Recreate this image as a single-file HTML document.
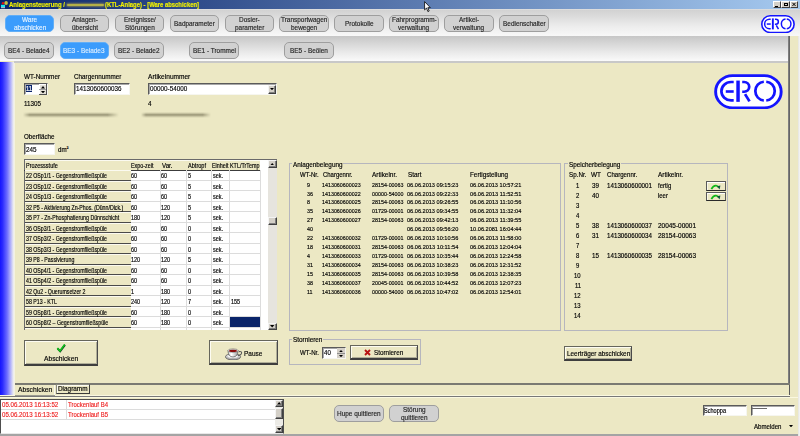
<!DOCTYPE html><html><head><meta charset="utf-8"><style>
*{margin:0;padding:0;box-sizing:border-box}
html,body{width:800px;height:436px;overflow:hidden;background:#ece8c4;font-family:"Liberation Sans",sans-serif;color:#000}
.a{position:absolute}
.t{position:absolute;white-space:nowrap;transform-origin:0 50%;-webkit-text-stroke:0.16px currentColor}
.rb{position:absolute;border-radius:5px;background:#d1d1d1;border:1px solid #9e9e9e}
.rb.sel{background:#3b9cfc;border-color:#62aef6}
.g{position:absolute;border:1px solid #b6b6be}
.sb{position:absolute;background:#d4d0c8;border:1px solid;border-color:#f4f4f4 #404040 #404040 #f4f4f4;box-shadow:inset -1px -1px 0 #808080}
.in{position:absolute;background:#fff;border:1px solid;border-color:#5a5a5a #f6f6f0 #f6f6f0 #5a5a5a;box-shadow:inset 1px 1px 0 #a8a8a8}
</style></head><body>
<div class="a" style="left:0.00px;top:0.00px;width:800.00px;height:9.00px;background:linear-gradient(90deg,#0a246a 0%,#a6caf0 100%)"></div>
<div class="t" style="left:9.00px;top:0.03px;font-size:7.0px;line-height:10px;transform:scaleX(0.8570);font-weight:bold;color:#f0f000">Anlagensteuerung /</div>
<div class="a" style="left:67.00px;top:3.80px;width:37.00px;height:1.80px;background:#b4b048;box-shadow:0 0 2px 1px #7a7a58;border-radius:2px"></div>
<div class="t" style="left:105.00px;top:0.03px;font-size:7.0px;line-height:10px;transform:scaleX(0.8410);font-weight:bold;color:#f0f000">(KTL-Anlage) - [Ware abschicken]</div>
<svg class="a" style="left:0;top:0" width="9" height="9" viewBox="0 0 9 9"><rect x="1" y="4.8" width="4" height="2.6" fill="#18e8f4"/><rect x="1" y="7.3" width="4" height="0.9" fill="#e8d8d8"/><circle cx="3" cy="3.3" r="1.2" fill="#e01010"/><ellipse cx="6.1" cy="2.9" rx="1.8" ry="2" fill="#c8c040"/></svg>
<div class="a" style="left:773.00px;top:1.30px;width:8.00px;height:6.70px;background:#d4d0c8;border:1px solid;border-color:#fff #404040 #404040 #fff"></div>
<div class="a" style="left:781.20px;top:1.30px;width:8.40px;height:6.70px;background:#d4d0c8;border:1px solid;border-color:#fff #404040 #404040 #fff"></div>
<div class="a" style="left:790.00px;top:1.30px;width:8.00px;height:6.70px;background:#d4d0c8;border:1px solid;border-color:#fff #404040 #404040 #fff"></div>
<div class="a" style="left:775.00px;top:5.60px;width:3.00px;height:1.00px;background:#000"></div>
<div class="a" style="left:784.00px;top:3.20px;width:3.50px;height:3.20px;border:0.8px solid #000;border-top-width:1.2px"></div>
<svg class="a" style="left:790px;top:1.3px" width="8" height="6.7" viewBox="0 0 8 6.7"><path d="M2.4,1.8 L5.6,5 M5.6,1.8 L2.4,5" stroke="#000" stroke-width="1"/></svg>
<div class="a" style="left:0.00px;top:9.00px;width:800.00px;height:27.00px;background:linear-gradient(#e6e6e6 0,#d2d2d2 4%,#d8d8d8 20%,#ededed 65%,#f8f8f8 100%)"></div>
<div class="a" style="left:0.00px;top:36.00px;width:789.00px;height:25.00px;background:linear-gradient(#c6c6c6 0,#d4d4d4 25%,#ececec 70%,#f6f6f6 92%,#fbfbfb 100%)"></div>
<div class="rb sel" style="left:4.90px;top:14.5px;width:49.6px;height:17.4px"></div>
<div class="t" style="left:22.12px;top:15.03px;font-size:7.0px;line-height:10px;transform:scaleX(0.9200);color:#e4f2ff">Ware</div>
<div class="t" style="left:13.59px;top:22.73px;font-size:7.0px;line-height:10px;transform:scaleX(0.9200);color:#e4f2ff">abschicken</div>
<div class="rb" style="left:59.80px;top:14.5px;width:49.6px;height:17.4px"></div>
<div class="t" style="left:71.71px;top:15.03px;font-size:7.0px;line-height:10px;transform:scaleX(0.9200);color:#262626">Anlagen-</div>
<div class="t" style="left:71.53px;top:22.73px;font-size:7.0px;line-height:10px;transform:scaleX(0.9200);color:#262626">übersicht</div>
<div class="rb" style="left:114.70px;top:14.5px;width:49.6px;height:17.4px"></div>
<div class="t" style="left:123.57px;top:15.03px;font-size:7.0px;line-height:10px;transform:scaleX(0.9200);color:#262626">Ereignisse/</div>
<div class="t" style="left:124.64px;top:22.73px;font-size:7.0px;line-height:10px;transform:scaleX(0.9200);color:#262626">Störungen</div>
<div class="rb" style="left:169.60px;top:14.5px;width:49.6px;height:17.4px"></div>
<div class="t" style="left:173.99px;top:18.83px;font-size:7.0px;line-height:10px;transform:scaleX(0.9200);color:#262626">Badparameter</div>
<div class="rb" style="left:224.50px;top:14.5px;width:49.6px;height:17.4px"></div>
<div class="t" style="left:238.92px;top:15.03px;font-size:7.0px;line-height:10px;transform:scaleX(0.9200);color:#262626">Dosier-</div>
<div class="t" style="left:234.62px;top:22.73px;font-size:7.0px;line-height:10px;transform:scaleX(0.9200);color:#262626">parameter</div>
<div class="rb" style="left:279.40px;top:14.5px;width:49.6px;height:17.4px"></div>
<div class="t" style="left:281.05px;top:15.03px;font-size:7.0px;line-height:10px;transform:scaleX(0.9200);color:#262626">Transportwagen</div>
<div class="t" style="left:291.13px;top:22.73px;font-size:7.0px;line-height:10px;transform:scaleX(0.9200);color:#262626">bewegen</div>
<div class="rb" style="left:334.30px;top:14.5px;width:49.6px;height:17.4px"></div>
<div class="t" style="left:344.78px;top:18.83px;font-size:7.0px;line-height:10px;transform:scaleX(0.9200);color:#262626">Protokolle</div>
<div class="rb" style="left:389.20px;top:14.5px;width:49.6px;height:17.4px"></div>
<div class="t" style="left:391.63px;top:15.03px;font-size:7.0px;line-height:10px;transform:scaleX(0.9200);color:#262626">Fahrprogramm-</div>
<div class="t" style="left:398.42px;top:22.73px;font-size:7.0px;line-height:10px;transform:scaleX(0.9200);color:#262626">verwaltung</div>
<div class="rb" style="left:444.10px;top:14.5px;width:49.6px;height:17.4px"></div>
<div class="t" style="left:458.88px;top:15.03px;font-size:7.0px;line-height:10px;transform:scaleX(0.9200);color:#262626">Artikel-</div>
<div class="t" style="left:453.32px;top:22.73px;font-size:7.0px;line-height:10px;transform:scaleX(0.9200);color:#262626">verwaltung</div>
<div class="rb" style="left:499.00px;top:14.5px;width:49.6px;height:17.4px"></div>
<div class="t" style="left:502.50px;top:18.83px;font-size:7.0px;line-height:10px;transform:scaleX(0.9200);color:#262626">Bedienschalter</div>
<div class="rb" style="left:4.3px;top:41.6px;width:49.5px;height:17.2px"></div>
<div class="t" style="left:8.28px;top:45.83px;font-size:7.0px;line-height:10px;transform:scaleX(0.9200);color:#262626">BE4 - Belade4</div>
<div class="rb sel" style="left:59.6px;top:41.6px;width:49.2px;height:17.2px"></div>
<div class="t" style="left:63.43px;top:45.83px;font-size:7.0px;line-height:10px;transform:scaleX(0.9200);color:#d8ecff">BE3 - Belade3</div>
<div class="rb" style="left:114.4px;top:41.6px;width:49.6px;height:17.2px"></div>
<div class="t" style="left:118.43px;top:45.83px;font-size:7.0px;line-height:10px;transform:scaleX(0.9200);color:#262626">BE2 - Belade2</div>
<div class="rb" style="left:188.8px;top:41.6px;width:50.5px;height:17.2px"></div>
<div class="t" style="left:192.57px;top:45.83px;font-size:7.0px;line-height:10px;transform:scaleX(0.9200);color:#262626">BE1 - Trommel</div>
<div class="rb" style="left:284.3px;top:41.6px;width:49.8px;height:17.2px"></div>
<div class="t" style="left:290.23px;top:45.83px;font-size:7.0px;line-height:10px;transform:scaleX(0.9200);color:#262626">BE5 - Beölen</div>
<svg class="a" style="left:761.1px;top:14.5px" width="33.9" height="18.3" viewBox="761.1 14.5 33.9 18.3" preserveAspectRatio="none">
<rect x="761.9" y="15.3" width="32.3" height="16.7" rx="8.35" ry="8.35" fill="#fff" stroke="#1414ff" stroke-width="1.6"/>
<g fill="none" stroke="#1414ff">
<path d="M770.8,18.65 H769.5 A4.75,4.75 0 0 0 769.5,28.15 H770.8" stroke-width="1.5"/>
<path d="M766.9,23.55 H770.8" stroke-width="1.5"/>
<path d="M772.95,17.9 V28.9" stroke-width="1.9"/>
<path d="M775,18.65 H775.95 A2.5,2.5 0 0 1 775.95,23.65 H775" stroke-width="1.5"/>
<path d="M776.4,24.9 L778.6,28.7" stroke-width="1.5"/>
<path d="M786.85,18.47 A4.6,4.9 0 0 1 786.85,28.23 M785.65,28.23 A4.6,4.9 0 0 1 785.65,18.47" stroke-width="1.5"/>
</g></svg>
<div class="a" style="left:0.00px;top:61.60px;width:13.80px;height:333.70px;background:linear-gradient(90deg,#1414ff 0%,#2a2aff 18%,#6a6aff 50%,#b8b8fa 78%,#e8e8f0 94%,#f2f2ee 100%)"></div>
<div class="a" style="left:13.80px;top:61.60px;width:1.40px;height:333.70px;background:#f4f2e2"></div>
<div class="a" style="left:13.80px;top:61.20px;width:776.20px;height:1.40px;background:#c8c8c8"></div>
<div class="a" style="left:787.80px;top:36.00px;width:2.00px;height:348.00px;background:linear-gradient(90deg,#8a8a8a,#5a5a5a)"></div>
<div class="a" style="left:788.60px;top:384.00px;width:1.20px;height:12.50px;background:#5a5a5a"></div>
<div class="a" style="left:789.80px;top:36.00px;width:7.70px;height:362.00px;background:#ece8c4"></div>
<div class="a" style="left:797.50px;top:36.00px;width:2.50px;height:400.00px;background:linear-gradient(90deg,#e4e4e0,#f6f6f6)"></div>
<div class="t" style="left:24.00px;top:71.92px;font-size:6.8px;line-height:10px;transform:scaleX(0.9373);">WT-Nummer</div>
<div class="t" style="left:74.20px;top:71.92px;font-size:6.8px;line-height:10px;transform:scaleX(0.9275);">Chargennummer</div>
<div class="t" style="left:148.40px;top:71.92px;font-size:6.8px;line-height:10px;transform:scaleX(0.9655);">Artikelnummer</div>
<div class="in" style="left:24.2px;top:83.2px;width:23.7px;height:12.2px"></div>
<div class="a" style="left:25.90px;top:85.00px;width:6.10px;height:7.40px;background:#0a246a"></div>
<div class="t" style="left:26.20px;top:84.32px;font-size:6.6px;line-height:10px;transform:scaleX(0.9000);color:#fff">11</div>
<div class="a" style="left:39.40px;top:84.40px;width:7.90px;height:10.20px;background:#e2dfd6;border-right:1px solid #505050;border-bottom:1px solid #505050;box-shadow:inset 1px 1px 0 #fff"></div>
<svg class="a" style="left:41.10px;top:86.40px" width="4" height="2.4" viewBox="0 0 4 2.4"><path d="M0,2.4 L2.0,0 L4,2.4z" fill="#000"/></svg>
<svg class="a" style="left:41.10px;top:90.80px" width="4" height="2.4" viewBox="0 0 4 2.4"><path d="M0,0 L2.0,2.4 L4,0z" fill="#000"/></svg>
<div class="a" style="left:39.40px;top:89.30px;width:6.90px;height:0.60px;background:#a0a0a0"></div>
<div class="in" style="left:73.9px;top:83.3px;width:56.1px;height:11.7px"></div>
<div class="t" style="left:76.40px;top:84.23px;font-size:7.4px;line-height:10px;transform:scaleX(0.8533);">1413060600036</div>
<div class="in" style="left:148.4px;top:83.2px;width:128.2px;height:11.4px"></div>
<div class="t" style="left:150.20px;top:84.33px;font-size:7.4px;line-height:10px;transform:scaleX(0.8536);">00000-54000</div>
<div class="sb" style="left:268.4px;top:84.6px;width:7.6px;height:9px"></div>
<svg class="a" style="left:270.20px;top:88.20px" width="4" height="2.2" viewBox="0 0 4 2.2"><path d="M0,0 L2.0,2.2 L4,0z" fill="#000"/></svg>
<div class="t" style="left:24.00px;top:98.83px;font-size:7.2px;line-height:10px;transform:scaleX(0.8739);">11305</div>
<div class="t" style="left:148.40px;top:98.83px;font-size:7.2px;line-height:10px;transform:scaleX(0.8800);">4</div>
<div class="a" style="left:23.00px;top:112.00px;width:96.00px;height:6.00px;background:linear-gradient(180deg,rgba(80,76,50,0) 0%,rgba(80,76,50,.22) 22%,rgba(80,76,50,.5) 45%,rgba(80,76,50,.38) 62%,rgba(80,76,50,.14) 82%,rgba(80,76,50,0) 100%);-webkit-mask-image:linear-gradient(90deg,transparent 0%,#000 7%,#000 88%,transparent 100%)"></div>
<div class="a" style="left:141.00px;top:112.40px;width:70.00px;height:5.40px;background:linear-gradient(180deg,rgba(80,76,50,0) 0%,rgba(80,76,50,.22) 22%,rgba(80,76,50,.5) 45%,rgba(80,76,50,.38) 62%,rgba(80,76,50,.14) 82%,rgba(80,76,50,0) 100%);-webkit-mask-image:linear-gradient(90deg,transparent 0%,#000 7%,#000 88%,transparent 100%)"></div>
<div class="t" style="left:24.30px;top:132.32px;font-size:6.8px;line-height:10px;transform:scaleX(0.9173);">Oberfläche</div>
<div class="in" style="left:24.3px;top:143.3px;width:30.4px;height:11.7px"></div>
<div class="t" style="left:26.00px;top:144.63px;font-size:7.4px;line-height:10px;transform:scaleX(0.8587);">245</div>
<div class="t" style="left:58.00px;top:144.62px;font-size:6.8px;line-height:10px;transform:scaleX(0.9098);">dm</div>
<div class="t" style="left:66.60px;top:143.21px;font-size:6.0px;line-height:10px;transform:scaleX(1.0000);">²</div>
<svg class="a" style="left:714px;top:73.6px" width="68.8" height="35.4" viewBox="761.1 14.5 33.9 18.3" preserveAspectRatio="none">
<rect x="761.9" y="15.3" width="32.3" height="16.7" rx="8.35" ry="8.35" fill="#fff" stroke="#1414ff" stroke-width="1.4400000000000002"/>
<g fill="none" stroke="#1414ff">
<path d="M770.8,18.65 H769.5 A4.75,4.75 0 0 0 769.5,28.15 H770.8" stroke-width="1.35"/>
<path d="M766.9,23.55 H770.8" stroke-width="1.35"/>
<path d="M772.95,17.9 V28.9" stroke-width="1.71"/>
<path d="M775,18.65 H775.95 A2.5,2.5 0 0 1 775.95,23.65 H775" stroke-width="1.35"/>
<path d="M776.4,24.9 L778.6,28.7" stroke-width="1.35"/>
<path d="M786.85,18.47 A4.6,4.9 0 0 1 786.85,28.23 M785.65,28.23 A4.6,4.9 0 0 1 785.65,18.47" stroke-width="1.35"/>
</g></svg>
<svg class="a" style="left:423.6px;top:0.8px" width="8" height="12" viewBox="0 0 8 12"><path d="M0.6,0.6 L0.6,8.9 L2.5,7.1 L3.9,10.6 L5.2,10 L3.8,6.7 L6.3,6.6z" fill="#fff" stroke="#000" stroke-width="0.8" stroke-linejoin="round"/></svg>
<div class="a" style="left:24.3px;top:159.3px;width:252.7px;height:171.2px;overflow:hidden;background:#fff">
<div class="a" style="left:0.00px;top:0.00px;width:236.20px;height:10.90px;background:#ece8c4"></div>
<div class="a" style="left:0.00px;top:0.00px;width:252.70px;height:1.00px;background:#6a6a6a"></div>
<div class="a" style="left:0.00px;top:0.00px;width:1.00px;height:171.70px;background:#6a6a6a"></div>
<div class="a" style="left:1.00px;top:1.00px;width:235.20px;height:0.70px;background:#fbfaf0"></div>
<div class="a" style="left:0.00px;top:10.40px;width:236.20px;height:1.10px;background:#3c3c3c"></div>
<div class="t" style="left:1.70px;top:1.32px;font-size:6.4px;line-height:10px;transform:scaleX(0.8600);">Prozessstufe</div>
<div class="t" style="left:106.80px;top:1.32px;font-size:6.4px;line-height:10px;transform:scaleX(0.8446);">Expo-zeit</div>
<div class="t" style="left:137.30px;top:1.32px;font-size:6.4px;line-height:10px;transform:scaleX(0.9628);">Var.</div>
<div class="t" style="left:163.30px;top:1.32px;font-size:6.4px;line-height:10px;transform:scaleX(0.8734);">Abtropf</div>
<div class="t" style="left:188.00px;top:1.32px;font-size:6.4px;line-height:10px;transform:scaleX(0.8441);">Einheit</div>
<div class="t" style="left:206.00px;top:1.32px;font-size:6.4px;line-height:10px;transform:scaleX(0.8447);">KTL/TrTemp</div>
<div class="a" style="left:1.00px;top:10.90px;width:105.30px;height:10.50px;background:#ece8c4"></div>
<div class="a" style="left:1.00px;top:11.20px;width:105.30px;height:0.80px;background:#fbfaf0"></div>
<div class="a" style="left:1.00px;top:20.40px;width:105.30px;height:1.10px;background:#4a4a4a"></div>
<div class="a" style="left:106.30px;top:20.60px;width:129.90px;height:0.90px;background:#dcdcdc"></div>
<div class="t" style="left:1.70px;top:11.72px;font-size:6.4px;line-height:10px;transform:scaleX(0.8200);">22 OSp1/1 - Gegenstromfließspüle</div>
<div class="t" style="left:107.20px;top:11.72px;font-size:6.4px;line-height:10px;transform:scaleX(0.8600);">60</div>
<div class="t" style="left:137.00px;top:11.72px;font-size:6.4px;line-height:10px;transform:scaleX(0.8600);">60</div>
<div class="t" style="left:163.40px;top:11.72px;font-size:6.4px;line-height:10px;transform:scaleX(0.8600);">5</div>
<div class="t" style="left:188.50px;top:11.72px;font-size:6.4px;line-height:10px;transform:scaleX(0.8600);">sek.</div>
<div class="a" style="left:1.00px;top:21.40px;width:105.30px;height:10.50px;background:#ece8c4"></div>
<div class="a" style="left:1.00px;top:21.70px;width:105.30px;height:0.80px;background:#fbfaf0"></div>
<div class="a" style="left:1.00px;top:30.90px;width:105.30px;height:1.10px;background:#4a4a4a"></div>
<div class="a" style="left:106.30px;top:31.10px;width:129.90px;height:0.90px;background:#dcdcdc"></div>
<div class="t" style="left:1.70px;top:22.22px;font-size:6.4px;line-height:10px;transform:scaleX(0.8200);">23 OSp1/2 - Gegenstromfließspüle</div>
<div class="t" style="left:107.20px;top:22.22px;font-size:6.4px;line-height:10px;transform:scaleX(0.8600);">60</div>
<div class="t" style="left:137.00px;top:22.22px;font-size:6.4px;line-height:10px;transform:scaleX(0.8600);">60</div>
<div class="t" style="left:163.40px;top:22.22px;font-size:6.4px;line-height:10px;transform:scaleX(0.8600);">5</div>
<div class="t" style="left:188.50px;top:22.22px;font-size:6.4px;line-height:10px;transform:scaleX(0.8600);">sek.</div>
<div class="a" style="left:1.00px;top:31.90px;width:105.30px;height:10.50px;background:#ece8c4"></div>
<div class="a" style="left:1.00px;top:32.20px;width:105.30px;height:0.80px;background:#fbfaf0"></div>
<div class="a" style="left:1.00px;top:41.40px;width:105.30px;height:1.10px;background:#4a4a4a"></div>
<div class="a" style="left:106.30px;top:41.60px;width:129.90px;height:0.90px;background:#dcdcdc"></div>
<div class="t" style="left:1.70px;top:32.72px;font-size:6.4px;line-height:10px;transform:scaleX(0.8200);">24 OSp1/3 - Gegenstromfließspüle</div>
<div class="t" style="left:107.20px;top:32.72px;font-size:6.4px;line-height:10px;transform:scaleX(0.8600);">60</div>
<div class="t" style="left:137.00px;top:32.72px;font-size:6.4px;line-height:10px;transform:scaleX(0.8600);">60</div>
<div class="t" style="left:163.40px;top:32.72px;font-size:6.4px;line-height:10px;transform:scaleX(0.8600);">5</div>
<div class="t" style="left:188.50px;top:32.72px;font-size:6.4px;line-height:10px;transform:scaleX(0.8600);">sek.</div>
<div class="a" style="left:1.00px;top:42.40px;width:105.30px;height:10.50px;background:#ece8c4"></div>
<div class="a" style="left:1.00px;top:42.70px;width:105.30px;height:0.80px;background:#fbfaf0"></div>
<div class="a" style="left:1.00px;top:51.90px;width:105.30px;height:1.10px;background:#4a4a4a"></div>
<div class="a" style="left:106.30px;top:52.10px;width:129.90px;height:0.90px;background:#dcdcdc"></div>
<div class="t" style="left:1.70px;top:43.22px;font-size:6.4px;line-height:10px;transform:scaleX(0.8200);">32 P5 - Aktivierung Zn-Phos. (Dünn/Dick.)</div>
<div class="t" style="left:107.20px;top:43.22px;font-size:6.4px;line-height:10px;transform:scaleX(0.8600);">60</div>
<div class="t" style="left:137.00px;top:43.22px;font-size:6.4px;line-height:10px;transform:scaleX(0.8600);">120</div>
<div class="t" style="left:163.40px;top:43.22px;font-size:6.4px;line-height:10px;transform:scaleX(0.8600);">5</div>
<div class="t" style="left:188.50px;top:43.22px;font-size:6.4px;line-height:10px;transform:scaleX(0.8600);">sek.</div>
<div class="a" style="left:1.00px;top:52.90px;width:105.30px;height:10.50px;background:#ece8c4"></div>
<div class="a" style="left:1.00px;top:53.20px;width:105.30px;height:0.80px;background:#fbfaf0"></div>
<div class="a" style="left:1.00px;top:62.40px;width:105.30px;height:1.10px;background:#4a4a4a"></div>
<div class="a" style="left:106.30px;top:62.60px;width:129.90px;height:0.90px;background:#dcdcdc"></div>
<div class="t" style="left:1.70px;top:53.72px;font-size:6.4px;line-height:10px;transform:scaleX(0.8200);">35 P7 - Zn-Phosphatierung Dünnschicht</div>
<div class="t" style="left:107.20px;top:53.72px;font-size:6.4px;line-height:10px;transform:scaleX(0.8600);">180</div>
<div class="t" style="left:137.00px;top:53.72px;font-size:6.4px;line-height:10px;transform:scaleX(0.8600);">120</div>
<div class="t" style="left:163.40px;top:53.72px;font-size:6.4px;line-height:10px;transform:scaleX(0.8600);">5</div>
<div class="t" style="left:188.50px;top:53.72px;font-size:6.4px;line-height:10px;transform:scaleX(0.8600);">sek.</div>
<div class="a" style="left:1.00px;top:63.40px;width:105.30px;height:10.50px;background:#ece8c4"></div>
<div class="a" style="left:1.00px;top:63.70px;width:105.30px;height:0.80px;background:#fbfaf0"></div>
<div class="a" style="left:1.00px;top:72.90px;width:105.30px;height:1.10px;background:#4a4a4a"></div>
<div class="a" style="left:106.30px;top:73.10px;width:129.90px;height:0.90px;background:#dcdcdc"></div>
<div class="t" style="left:1.70px;top:64.22px;font-size:6.4px;line-height:10px;transform:scaleX(0.8200);">36 OSp3/1 - Gegenstromfließspüle</div>
<div class="t" style="left:107.20px;top:64.22px;font-size:6.4px;line-height:10px;transform:scaleX(0.8600);">60</div>
<div class="t" style="left:137.00px;top:64.22px;font-size:6.4px;line-height:10px;transform:scaleX(0.8600);">60</div>
<div class="t" style="left:163.40px;top:64.22px;font-size:6.4px;line-height:10px;transform:scaleX(0.8600);">0</div>
<div class="t" style="left:188.50px;top:64.22px;font-size:6.4px;line-height:10px;transform:scaleX(0.8600);">sek.</div>
<div class="a" style="left:1.00px;top:73.90px;width:105.30px;height:10.50px;background:#ece8c4"></div>
<div class="a" style="left:1.00px;top:74.20px;width:105.30px;height:0.80px;background:#fbfaf0"></div>
<div class="a" style="left:1.00px;top:83.40px;width:105.30px;height:1.10px;background:#4a4a4a"></div>
<div class="a" style="left:106.30px;top:83.60px;width:129.90px;height:0.90px;background:#dcdcdc"></div>
<div class="t" style="left:1.70px;top:74.72px;font-size:6.4px;line-height:10px;transform:scaleX(0.8200);">37 OSp3/2 - Gegenstromfließspüle</div>
<div class="t" style="left:107.20px;top:74.72px;font-size:6.4px;line-height:10px;transform:scaleX(0.8600);">60</div>
<div class="t" style="left:137.00px;top:74.72px;font-size:6.4px;line-height:10px;transform:scaleX(0.8600);">60</div>
<div class="t" style="left:163.40px;top:74.72px;font-size:6.4px;line-height:10px;transform:scaleX(0.8600);">0</div>
<div class="t" style="left:188.50px;top:74.72px;font-size:6.4px;line-height:10px;transform:scaleX(0.8600);">sek.</div>
<div class="a" style="left:1.00px;top:84.40px;width:105.30px;height:10.50px;background:#ece8c4"></div>
<div class="a" style="left:1.00px;top:84.70px;width:105.30px;height:0.80px;background:#fbfaf0"></div>
<div class="a" style="left:1.00px;top:93.90px;width:105.30px;height:1.10px;background:#4a4a4a"></div>
<div class="a" style="left:106.30px;top:94.10px;width:129.90px;height:0.90px;background:#dcdcdc"></div>
<div class="t" style="left:1.70px;top:85.22px;font-size:6.4px;line-height:10px;transform:scaleX(0.8200);">38 OSp3/3 - Gegenstromfließspüle</div>
<div class="t" style="left:107.20px;top:85.22px;font-size:6.4px;line-height:10px;transform:scaleX(0.8600);">60</div>
<div class="t" style="left:137.00px;top:85.22px;font-size:6.4px;line-height:10px;transform:scaleX(0.8600);">60</div>
<div class="t" style="left:163.40px;top:85.22px;font-size:6.4px;line-height:10px;transform:scaleX(0.8600);">0</div>
<div class="t" style="left:188.50px;top:85.22px;font-size:6.4px;line-height:10px;transform:scaleX(0.8600);">sek.</div>
<div class="a" style="left:1.00px;top:94.90px;width:105.30px;height:10.50px;background:#ece8c4"></div>
<div class="a" style="left:1.00px;top:95.20px;width:105.30px;height:0.80px;background:#fbfaf0"></div>
<div class="a" style="left:1.00px;top:104.40px;width:105.30px;height:1.10px;background:#4a4a4a"></div>
<div class="a" style="left:106.30px;top:104.60px;width:129.90px;height:0.90px;background:#dcdcdc"></div>
<div class="t" style="left:1.70px;top:95.72px;font-size:6.4px;line-height:10px;transform:scaleX(0.8200);">39 P8 - Passivierung</div>
<div class="t" style="left:107.20px;top:95.72px;font-size:6.4px;line-height:10px;transform:scaleX(0.8600);">120</div>
<div class="t" style="left:137.00px;top:95.72px;font-size:6.4px;line-height:10px;transform:scaleX(0.8600);">120</div>
<div class="t" style="left:163.40px;top:95.72px;font-size:6.4px;line-height:10px;transform:scaleX(0.8600);">5</div>
<div class="t" style="left:188.50px;top:95.72px;font-size:6.4px;line-height:10px;transform:scaleX(0.8600);">sek.</div>
<div class="a" style="left:1.00px;top:105.40px;width:105.30px;height:10.50px;background:#ece8c4"></div>
<div class="a" style="left:1.00px;top:105.70px;width:105.30px;height:0.80px;background:#fbfaf0"></div>
<div class="a" style="left:1.00px;top:114.90px;width:105.30px;height:1.10px;background:#4a4a4a"></div>
<div class="a" style="left:106.30px;top:115.10px;width:129.90px;height:0.90px;background:#dcdcdc"></div>
<div class="t" style="left:1.70px;top:106.22px;font-size:6.4px;line-height:10px;transform:scaleX(0.8200);">40 OSp4/1 - Gegenstromfließspüle</div>
<div class="t" style="left:107.20px;top:106.22px;font-size:6.4px;line-height:10px;transform:scaleX(0.8600);">60</div>
<div class="t" style="left:137.00px;top:106.22px;font-size:6.4px;line-height:10px;transform:scaleX(0.8600);">60</div>
<div class="t" style="left:163.40px;top:106.22px;font-size:6.4px;line-height:10px;transform:scaleX(0.8600);">0</div>
<div class="t" style="left:188.50px;top:106.22px;font-size:6.4px;line-height:10px;transform:scaleX(0.8600);">sek.</div>
<div class="a" style="left:1.00px;top:115.90px;width:105.30px;height:10.50px;background:#ece8c4"></div>
<div class="a" style="left:1.00px;top:116.20px;width:105.30px;height:0.80px;background:#fbfaf0"></div>
<div class="a" style="left:1.00px;top:125.40px;width:105.30px;height:1.10px;background:#4a4a4a"></div>
<div class="a" style="left:106.30px;top:125.60px;width:129.90px;height:0.90px;background:#dcdcdc"></div>
<div class="t" style="left:1.70px;top:116.72px;font-size:6.4px;line-height:10px;transform:scaleX(0.8200);">41 OSp4/2 - Gegenstromfließspüle</div>
<div class="t" style="left:107.20px;top:116.72px;font-size:6.4px;line-height:10px;transform:scaleX(0.8600);">60</div>
<div class="t" style="left:137.00px;top:116.72px;font-size:6.4px;line-height:10px;transform:scaleX(0.8600);">60</div>
<div class="t" style="left:163.40px;top:116.72px;font-size:6.4px;line-height:10px;transform:scaleX(0.8600);">0</div>
<div class="t" style="left:188.50px;top:116.72px;font-size:6.4px;line-height:10px;transform:scaleX(0.8600);">sek.</div>
<div class="a" style="left:1.00px;top:126.40px;width:105.30px;height:10.50px;background:#ece8c4"></div>
<div class="a" style="left:1.00px;top:126.70px;width:105.30px;height:0.80px;background:#fbfaf0"></div>
<div class="a" style="left:1.00px;top:135.90px;width:105.30px;height:1.10px;background:#4a4a4a"></div>
<div class="a" style="left:106.30px;top:136.10px;width:129.90px;height:0.90px;background:#dcdcdc"></div>
<div class="t" style="left:1.70px;top:127.22px;font-size:6.4px;line-height:10px;transform:scaleX(0.8200);">42 Qu2 - Querumsetzer 2</div>
<div class="t" style="left:107.20px;top:127.22px;font-size:6.4px;line-height:10px;transform:scaleX(0.8600);">1</div>
<div class="t" style="left:137.00px;top:127.22px;font-size:6.4px;line-height:10px;transform:scaleX(0.8600);">180</div>
<div class="t" style="left:163.40px;top:127.22px;font-size:6.4px;line-height:10px;transform:scaleX(0.8600);">0</div>
<div class="t" style="left:188.50px;top:127.22px;font-size:6.4px;line-height:10px;transform:scaleX(0.8600);">sek.</div>
<div class="a" style="left:1.00px;top:136.90px;width:105.30px;height:10.50px;background:#ece8c4"></div>
<div class="a" style="left:1.00px;top:137.20px;width:105.30px;height:0.80px;background:#fbfaf0"></div>
<div class="a" style="left:1.00px;top:146.40px;width:105.30px;height:1.10px;background:#4a4a4a"></div>
<div class="a" style="left:106.30px;top:146.60px;width:129.90px;height:0.90px;background:#dcdcdc"></div>
<div class="t" style="left:1.70px;top:137.72px;font-size:6.4px;line-height:10px;transform:scaleX(0.8200);">58 P13 - KTL</div>
<div class="t" style="left:107.20px;top:137.72px;font-size:6.4px;line-height:10px;transform:scaleX(0.8600);">240</div>
<div class="t" style="left:137.00px;top:137.72px;font-size:6.4px;line-height:10px;transform:scaleX(0.8600);">120</div>
<div class="t" style="left:163.40px;top:137.72px;font-size:6.4px;line-height:10px;transform:scaleX(0.8600);">7</div>
<div class="t" style="left:188.50px;top:137.72px;font-size:6.4px;line-height:10px;transform:scaleX(0.8600);">sek.</div>
<div class="t" style="left:206.60px;top:137.72px;font-size:6.4px;line-height:10px;transform:scaleX(0.8600);">155</div>
<div class="a" style="left:1.00px;top:147.40px;width:105.30px;height:10.50px;background:#ece8c4"></div>
<div class="a" style="left:1.00px;top:147.70px;width:105.30px;height:0.80px;background:#fbfaf0"></div>
<div class="a" style="left:1.00px;top:156.90px;width:105.30px;height:1.10px;background:#4a4a4a"></div>
<div class="a" style="left:106.30px;top:157.10px;width:129.90px;height:0.90px;background:#dcdcdc"></div>
<div class="t" style="left:1.70px;top:148.22px;font-size:6.4px;line-height:10px;transform:scaleX(0.8200);">59 OSp8/1 - Gegenstromfließspüle</div>
<div class="t" style="left:107.20px;top:148.22px;font-size:6.4px;line-height:10px;transform:scaleX(0.8600);">60</div>
<div class="t" style="left:137.00px;top:148.22px;font-size:6.4px;line-height:10px;transform:scaleX(0.8600);">180</div>
<div class="t" style="left:163.40px;top:148.22px;font-size:6.4px;line-height:10px;transform:scaleX(0.8600);">0</div>
<div class="t" style="left:188.50px;top:148.22px;font-size:6.4px;line-height:10px;transform:scaleX(0.8600);">sek.</div>
<div class="a" style="left:1.00px;top:157.90px;width:105.30px;height:10.50px;background:#ece8c4"></div>
<div class="a" style="left:1.00px;top:158.20px;width:105.30px;height:0.80px;background:#fbfaf0"></div>
<div class="a" style="left:1.00px;top:167.40px;width:105.30px;height:1.10px;background:#4a4a4a"></div>
<div class="a" style="left:106.30px;top:167.60px;width:129.90px;height:0.90px;background:#dcdcdc"></div>
<div class="t" style="left:1.70px;top:158.72px;font-size:6.4px;line-height:10px;transform:scaleX(0.8200);">60 OSp8/2 – Gegenstromfließspüle</div>
<div class="t" style="left:107.20px;top:158.72px;font-size:6.4px;line-height:10px;transform:scaleX(0.8600);">60</div>
<div class="t" style="left:137.00px;top:158.72px;font-size:6.4px;line-height:10px;transform:scaleX(0.8600);">180</div>
<div class="t" style="left:163.40px;top:158.72px;font-size:6.4px;line-height:10px;transform:scaleX(0.8600);">0</div>
<div class="t" style="left:188.50px;top:158.72px;font-size:6.4px;line-height:10px;transform:scaleX(0.8600);">sek.</div>
<div class="a" style="left:205.50px;top:158.20px;width:30.60px;height:9.80px;background:#0a246a"></div>
<div class="a" style="left:1.00px;top:168.40px;width:105.30px;height:10.50px;background:#ece8c4"></div>
<div class="a" style="left:1.00px;top:168.70px;width:105.30px;height:0.80px;background:#fbfaf0"></div>
<div class="a" style="left:1.00px;top:177.90px;width:105.30px;height:1.10px;background:#4a4a4a"></div>
<div class="a" style="left:106.30px;top:178.10px;width:129.90px;height:0.90px;background:#dcdcdc"></div>
<div class="t" style="left:1.70px;top:169.22px;font-size:6.4px;line-height:10px;transform:scaleX(0.8200);">61 OSp8/3 – Gegenstromfließspüle</div>
<div class="t" style="left:107.20px;top:169.22px;font-size:6.4px;line-height:10px;transform:scaleX(0.8600);">60</div>
<div class="t" style="left:137.00px;top:169.22px;font-size:6.4px;line-height:10px;transform:scaleX(0.8600);">180</div>
<div class="t" style="left:163.40px;top:169.22px;font-size:6.4px;line-height:10px;transform:scaleX(0.8600);">0</div>
<div class="t" style="left:188.50px;top:169.22px;font-size:6.4px;line-height:10px;transform:scaleX(0.8600);">sek.</div>
<div class="a" style="left:135.60px;top:10.90px;width:0.90px;height:160.80px;background:#dcdcdc"></div>
<div class="a" style="left:161.60px;top:10.90px;width:0.90px;height:160.80px;background:#dcdcdc"></div>
<div class="a" style="left:186.70px;top:10.90px;width:0.90px;height:160.80px;background:#dcdcdc"></div>
<div class="a" style="left:204.80px;top:10.90px;width:0.90px;height:160.80px;background:#dcdcdc"></div>
<div class="a" style="left:235.70px;top:10.90px;width:0.90px;height:160.80px;background:#dcdcdc"></div>
<div class="a" style="left:244.10px;top:1.00px;width:8.60px;height:170.70px;background:#e6e4de"></div>
<div class="a" style="left:252.30px;top:0.00px;width:1.00px;height:171.70px;background:#d0d0d0"></div>
<div class="sb" style="left:244.10px;top:1.20px;width:8.4px;height:7.6px"></div>
<svg class="a" style="left:246.20px;top:3.50px" width="4.4" height="2.6" viewBox="0 0 4.4 2.6"><path d="M0,2.6 L2.2,0 L4.4,2.6z" fill="#000"/></svg>
<div class="sb" style="left:244.10px;top:57.60px;width:8.4px;height:7.8px"></div>
<div class="sb" style="left:244.10px;top:163.60px;width:8.4px;height:7.6px"></div>
<svg class="a" style="left:246.20px;top:166.10px" width="4.4" height="2.6" viewBox="0 0 4.4 2.6"><path d="M0,0 L2.2,2.6 L4.4,0z" fill="#000"/></svg>
</div>
<div class="g" style="left:289.2px;top:163.3px;width:271.5px;height:168px"></div>
<div class="a" style="left:292.00px;top:160.00px;width:51.00px;height:7.00px;background:#ece8c4"></div>
<div class="t" style="left:292.80px;top:159.62px;font-size:6.6px;line-height:10px;transform:scaleX(0.9641);">Anlagenbelegung</div>
<div class="t" style="left:300.00px;top:169.82px;font-size:6.6px;line-height:10px;transform:scaleX(0.9115);">WT-Nr.</div>
<div class="t" style="left:322.80px;top:169.82px;font-size:6.6px;line-height:10px;transform:scaleX(0.9042);">Chargennr.</div>
<div class="t" style="left:372.25px;top:169.82px;font-size:6.6px;line-height:10px;transform:scaleX(0.9744);">Artikelnr.</div>
<div class="t" style="left:407.60px;top:169.82px;font-size:6.6px;line-height:10px;transform:scaleX(0.9686);">Start</div>
<div class="t" style="left:469.90px;top:169.82px;font-size:6.6px;line-height:10px;transform:scaleX(0.9597);">Fertigstellung</div>
<div class="t" style="left:306.70px;top:179.51px;font-size:6.25px;line-height:10px;transform:scaleX(0.8600);">9</div>
<div class="t" style="left:322.40px;top:179.51px;font-size:6.25px;line-height:10px;transform:scaleX(0.8542);">1413060600023</div>
<div class="t" style="left:372.00px;top:179.51px;font-size:6.25px;line-height:10px;transform:scaleX(0.8550);">28154-00063</div>
<div class="t" style="left:407.20px;top:179.51px;font-size:6.25px;line-height:10px;transform:scaleX(0.8944);">06.06.2013 09:15:23</div>
<div class="t" style="left:469.60px;top:179.51px;font-size:6.25px;line-height:10px;transform:scaleX(0.8944);">06.06.2013 10:57:21</div>
<div class="t" style="left:306.70px;top:188.50px;font-size:6.25px;line-height:10px;transform:scaleX(0.8600);">36</div>
<div class="t" style="left:322.40px;top:188.50px;font-size:6.25px;line-height:10px;transform:scaleX(0.8542);">1413060600022</div>
<div class="t" style="left:372.00px;top:188.50px;font-size:6.25px;line-height:10px;transform:scaleX(0.8550);">00000-54000</div>
<div class="t" style="left:407.20px;top:188.50px;font-size:6.25px;line-height:10px;transform:scaleX(0.8944);">06.06.2013 09:22:33</div>
<div class="t" style="left:469.60px;top:188.50px;font-size:6.25px;line-height:10px;transform:scaleX(0.9017);">06.06.2013 11:52:51</div>
<div class="t" style="left:306.70px;top:197.49px;font-size:6.25px;line-height:10px;transform:scaleX(0.8600);">8</div>
<div class="t" style="left:322.40px;top:197.49px;font-size:6.25px;line-height:10px;transform:scaleX(0.8542);">1413060600025</div>
<div class="t" style="left:372.00px;top:197.49px;font-size:6.25px;line-height:10px;transform:scaleX(0.8550);">28154-00063</div>
<div class="t" style="left:407.20px;top:197.49px;font-size:6.25px;line-height:10px;transform:scaleX(0.8944);">06.06.2013 09:26:55</div>
<div class="t" style="left:469.60px;top:197.49px;font-size:6.25px;line-height:10px;transform:scaleX(0.9017);">06.06.2013 11:10:56</div>
<div class="t" style="left:306.70px;top:206.48px;font-size:6.25px;line-height:10px;transform:scaleX(0.8600);">35</div>
<div class="t" style="left:322.40px;top:206.48px;font-size:6.25px;line-height:10px;transform:scaleX(0.8542);">1413060600026</div>
<div class="t" style="left:372.00px;top:206.48px;font-size:6.25px;line-height:10px;transform:scaleX(0.8550);">01729-00001</div>
<div class="t" style="left:407.20px;top:206.48px;font-size:6.25px;line-height:10px;transform:scaleX(0.8944);">06.06.2013 09:34:55</div>
<div class="t" style="left:469.60px;top:206.48px;font-size:6.25px;line-height:10px;transform:scaleX(0.9017);">06.06.2013 11:32:04</div>
<div class="t" style="left:306.70px;top:215.47px;font-size:6.25px;line-height:10px;transform:scaleX(0.8600);">27</div>
<div class="t" style="left:322.40px;top:215.47px;font-size:6.25px;line-height:10px;transform:scaleX(0.8542);">1413060600027</div>
<div class="t" style="left:372.00px;top:215.47px;font-size:6.25px;line-height:10px;transform:scaleX(0.8550);">28154-00063</div>
<div class="t" style="left:407.20px;top:215.47px;font-size:6.25px;line-height:10px;transform:scaleX(0.8944);">06.06.2013 09:42:13</div>
<div class="t" style="left:469.60px;top:215.47px;font-size:6.25px;line-height:10px;transform:scaleX(0.9017);">06.06.2013 11:39:55</div>
<div class="t" style="left:306.70px;top:224.46px;font-size:6.25px;line-height:10px;transform:scaleX(0.8600);">40</div>
<div class="t" style="left:407.20px;top:224.46px;font-size:6.25px;line-height:10px;transform:scaleX(0.8944);">06.06.2013 09:56:20</div>
<div class="t" style="left:469.60px;top:224.46px;font-size:6.25px;line-height:10px;transform:scaleX(0.8944);">10.06.2081 16:04:44</div>
<div class="t" style="left:306.70px;top:233.45px;font-size:6.25px;line-height:10px;transform:scaleX(0.8600);">22</div>
<div class="t" style="left:322.40px;top:233.45px;font-size:6.25px;line-height:10px;transform:scaleX(0.8542);">1413060600032</div>
<div class="t" style="left:372.00px;top:233.45px;font-size:6.25px;line-height:10px;transform:scaleX(0.8550);">01729-00001</div>
<div class="t" style="left:407.20px;top:233.45px;font-size:6.25px;line-height:10px;transform:scaleX(0.8944);">06.06.2013 10:10:56</div>
<div class="t" style="left:469.60px;top:233.45px;font-size:6.25px;line-height:10px;transform:scaleX(0.9017);">06.06.2013 11:58:00</div>
<div class="t" style="left:306.70px;top:242.44px;font-size:6.25px;line-height:10px;transform:scaleX(0.8600);">18</div>
<div class="t" style="left:322.40px;top:242.44px;font-size:6.25px;line-height:10px;transform:scaleX(0.8542);">1413060600031</div>
<div class="t" style="left:372.00px;top:242.44px;font-size:6.25px;line-height:10px;transform:scaleX(0.8550);">28154-00063</div>
<div class="t" style="left:407.20px;top:242.44px;font-size:6.25px;line-height:10px;transform:scaleX(0.9017);">06.06.2013 10:11:54</div>
<div class="t" style="left:469.60px;top:242.44px;font-size:6.25px;line-height:10px;transform:scaleX(0.8944);">06.06.2013 12:04:04</div>
<div class="t" style="left:306.70px;top:251.43px;font-size:6.25px;line-height:10px;transform:scaleX(0.8600);">4</div>
<div class="t" style="left:322.40px;top:251.43px;font-size:6.25px;line-height:10px;transform:scaleX(0.8542);">1413060600033</div>
<div class="t" style="left:372.00px;top:251.43px;font-size:6.25px;line-height:10px;transform:scaleX(0.8550);">01729-00001</div>
<div class="t" style="left:407.20px;top:251.43px;font-size:6.25px;line-height:10px;transform:scaleX(0.8944);">06.06.2013 10:35:44</div>
<div class="t" style="left:469.60px;top:251.43px;font-size:6.25px;line-height:10px;transform:scaleX(0.8944);">06.06.2013 12:24:58</div>
<div class="t" style="left:306.70px;top:260.42px;font-size:6.25px;line-height:10px;transform:scaleX(0.8600);">31</div>
<div class="t" style="left:322.40px;top:260.42px;font-size:6.25px;line-height:10px;transform:scaleX(0.8542);">1413060600034</div>
<div class="t" style="left:372.00px;top:260.42px;font-size:6.25px;line-height:10px;transform:scaleX(0.8550);">28154-00063</div>
<div class="t" style="left:407.20px;top:260.42px;font-size:6.25px;line-height:10px;transform:scaleX(0.8944);">06.06.2013 10:38:23</div>
<div class="t" style="left:469.60px;top:260.42px;font-size:6.25px;line-height:10px;transform:scaleX(0.8944);">06.06.2013 12:31:52</div>
<div class="t" style="left:306.70px;top:269.41px;font-size:6.25px;line-height:10px;transform:scaleX(0.8600);">15</div>
<div class="t" style="left:322.40px;top:269.41px;font-size:6.25px;line-height:10px;transform:scaleX(0.8542);">1413060600035</div>
<div class="t" style="left:372.00px;top:269.41px;font-size:6.25px;line-height:10px;transform:scaleX(0.8550);">28154-00063</div>
<div class="t" style="left:407.20px;top:269.41px;font-size:6.25px;line-height:10px;transform:scaleX(0.8944);">06.06.2013 10:39:58</div>
<div class="t" style="left:469.60px;top:269.41px;font-size:6.25px;line-height:10px;transform:scaleX(0.8944);">06.06.2013 12:38:35</div>
<div class="t" style="left:306.70px;top:278.40px;font-size:6.25px;line-height:10px;transform:scaleX(0.8600);">38</div>
<div class="t" style="left:322.40px;top:278.40px;font-size:6.25px;line-height:10px;transform:scaleX(0.8542);">1413060600037</div>
<div class="t" style="left:372.00px;top:278.40px;font-size:6.25px;line-height:10px;transform:scaleX(0.8550);">20045-00001</div>
<div class="t" style="left:407.20px;top:278.40px;font-size:6.25px;line-height:10px;transform:scaleX(0.8944);">06.06.2013 10:44:52</div>
<div class="t" style="left:469.60px;top:278.40px;font-size:6.25px;line-height:10px;transform:scaleX(0.8944);">06.06.2013 12:07:23</div>
<div class="t" style="left:306.70px;top:287.39px;font-size:6.25px;line-height:10px;transform:scaleX(0.8600);">11</div>
<div class="t" style="left:322.40px;top:287.39px;font-size:6.25px;line-height:10px;transform:scaleX(0.8542);">1413060600036</div>
<div class="t" style="left:372.00px;top:287.39px;font-size:6.25px;line-height:10px;transform:scaleX(0.8550);">00000-54000</div>
<div class="t" style="left:407.20px;top:287.39px;font-size:6.25px;line-height:10px;transform:scaleX(0.8944);">06.06.2013 10:47:02</div>
<div class="t" style="left:469.60px;top:287.39px;font-size:6.25px;line-height:10px;transform:scaleX(0.8944);">06.06.2013 12:54:01</div>
<div class="g" style="left:564.3px;top:163.3px;width:163.8px;height:168px"></div>
<div class="a" style="left:567.50px;top:160.00px;width:53.50px;height:7.00px;background:#ece8c4"></div>
<div class="t" style="left:568.60px;top:159.62px;font-size:6.6px;line-height:10px;transform:scaleX(0.9667);">Speicherbelegung</div>
<div class="t" style="left:568.60px;top:170.02px;font-size:6.6px;line-height:10px;transform:scaleX(0.9494);">Sp.Nr.</div>
<div class="t" style="left:590.60px;top:170.02px;font-size:6.6px;line-height:10px;transform:scaleX(0.9741);">WT</div>
<div class="t" style="left:607.40px;top:170.02px;font-size:6.6px;line-height:10px;transform:scaleX(0.9257);">Chargennr.</div>
<div class="t" style="left:658.00px;top:170.02px;font-size:6.6px;line-height:10px;transform:scaleX(0.9744);">Artikelnr.</div>
<div class="t" style="left:575.95px;top:181.22px;font-size:6.6px;line-height:10px;transform:scaleX(0.9000);">1</div>
<div class="t" style="left:592.30px;top:181.22px;font-size:6.6px;line-height:10px;transform:scaleX(0.9532);">39</div>
<div class="t" style="left:607.40px;top:181.22px;font-size:6.6px;line-height:10px;transform:scaleX(0.9436);">1413060600001</div>
<div class="t" style="left:658.00px;top:181.22px;font-size:6.6px;line-height:10px;transform:scaleX(0.9000);">fertig</div>
<div class="t" style="left:575.95px;top:191.20px;font-size:6.6px;line-height:10px;transform:scaleX(0.9000);">2</div>
<div class="t" style="left:592.30px;top:191.20px;font-size:6.6px;line-height:10px;transform:scaleX(0.9532);">40</div>
<div class="t" style="left:658.00px;top:191.20px;font-size:6.6px;line-height:10px;transform:scaleX(0.9000);">leer</div>
<div class="t" style="left:575.95px;top:201.18px;font-size:6.6px;line-height:10px;transform:scaleX(0.9000);">3</div>
<div class="t" style="left:575.95px;top:211.16px;font-size:6.6px;line-height:10px;transform:scaleX(0.9000);">4</div>
<div class="t" style="left:575.95px;top:221.14px;font-size:6.6px;line-height:10px;transform:scaleX(0.9000);">5</div>
<div class="t" style="left:592.30px;top:221.14px;font-size:6.6px;line-height:10px;transform:scaleX(0.9532);">38</div>
<div class="t" style="left:607.40px;top:221.14px;font-size:6.6px;line-height:10px;transform:scaleX(0.9436);">1413060600037</div>
<div class="t" style="left:658.00px;top:221.14px;font-size:6.6px;line-height:10px;transform:scaleX(0.9775);">20045-00001</div>
<div class="t" style="left:575.95px;top:231.12px;font-size:6.6px;line-height:10px;transform:scaleX(0.9000);">6</div>
<div class="t" style="left:592.30px;top:231.12px;font-size:6.6px;line-height:10px;transform:scaleX(0.9532);">31</div>
<div class="t" style="left:607.40px;top:231.12px;font-size:6.6px;line-height:10px;transform:scaleX(0.9436);">1413060600034</div>
<div class="t" style="left:658.00px;top:231.12px;font-size:6.6px;line-height:10px;transform:scaleX(0.9775);">28154-00063</div>
<div class="t" style="left:575.95px;top:241.10px;font-size:6.6px;line-height:10px;transform:scaleX(0.9000);">7</div>
<div class="t" style="left:575.95px;top:251.08px;font-size:6.6px;line-height:10px;transform:scaleX(0.9000);">8</div>
<div class="t" style="left:592.30px;top:251.08px;font-size:6.6px;line-height:10px;transform:scaleX(0.9532);">15</div>
<div class="t" style="left:607.40px;top:251.08px;font-size:6.6px;line-height:10px;transform:scaleX(0.9436);">1413060600035</div>
<div class="t" style="left:658.00px;top:251.08px;font-size:6.6px;line-height:10px;transform:scaleX(0.9775);">28154-00063</div>
<div class="t" style="left:575.95px;top:261.06px;font-size:6.6px;line-height:10px;transform:scaleX(0.9000);">9</div>
<div class="t" style="left:574.30px;top:271.04px;font-size:6.6px;line-height:10px;transform:scaleX(0.9000);">10</div>
<div class="t" style="left:574.51px;top:281.02px;font-size:6.6px;line-height:10px;transform:scaleX(0.9000);">11</div>
<div class="t" style="left:574.30px;top:291.00px;font-size:6.6px;line-height:10px;transform:scaleX(0.9000);">12</div>
<div class="t" style="left:574.30px;top:300.98px;font-size:6.6px;line-height:10px;transform:scaleX(0.9000);">13</div>
<div class="t" style="left:574.30px;top:310.96px;font-size:6.6px;line-height:10px;transform:scaleX(0.9000);">14</div>
<div class="a" style="left:705.90px;top:181.20px;width:19.70px;height:10.30px;background:#ece8c4;border:1px solid #5a5a5a;border-bottom:1.8px solid #2a2a2a;box-shadow:inset 0 1px 0 #fff,inset 1px 0 0 #f8f6ea"></div>
<svg class="a" style="left:709px;top:183.0px" width="13" height="8" viewBox="0 0 13 8"><path d="M2.4,6.2 Q4.4,2.4 7,2.7 Q8.6,2.9 9.5,4.3" fill="none" stroke="#12b81a" stroke-width="1.8"/><path d="M8,3.2 L11.4,2.6 L10.6,6.4z" fill="#0e5a3a"/></svg>
<div class="a" style="left:705.90px;top:191.60px;width:19.70px;height:9.30px;background:#ece8c4;border:1px solid #5a5a5a;border-bottom:1.8px solid #2a2a2a;box-shadow:inset 0 1px 0 #fff,inset 1px 0 0 #f8f6ea"></div>
<svg class="a" style="left:709px;top:193.4px" width="13" height="8" viewBox="0 0 13 8"><path d="M2.4,6.2 Q4.4,2.4 7,2.7 Q8.6,2.9 9.5,4.3" fill="none" stroke="#12b81a" stroke-width="1.8"/><path d="M8,3.2 L11.4,2.6 L10.6,6.4z" fill="#0e5a3a"/></svg>
<div class="a" style="left:24.00px;top:340.20px;width:74.20px;height:25.40px;background:#ece8c4;border:1px solid #66665c;border-bottom:2px solid #3e3e3e;border-right-color:#4a4a4a;box-shadow:inset 1px 1px 0 #fdfcf2,inset -1px -1px 0 #b0ae98"></div>
<svg class="a" style="left:56px;top:343px" width="10" height="10" viewBox="0 0 10 10"><path d="M1.6,5.5 L4.2,8.3 L9,1.9" fill="none" stroke="#0a3a20" stroke-width="1.9"/><path d="M1.3,5.2 L3.9,8 L8.7,1.6" fill="none" stroke="#14c01c" stroke-width="1.7"/></svg>
<div class="t" style="left:44.00px;top:354.12px;font-size:6.65px;line-height:10px;transform:scaleX(1.0039);">Abschicken</div>
<div class="a" style="left:209.20px;top:340.10px;width:68.40px;height:24.90px;background:#ece8c4;border:1px solid #66665c;border-bottom:2px solid #3e3e3e;border-right-color:#4a4a4a;box-shadow:inset 1px 1px 0 #fdfcf2,inset -1px -1px 0 #b0ae98"></div>
<svg class="a" style="left:224.5px;top:346.5px" width="18" height="13.5" viewBox="0 0 18 13.5">
<defs><linearGradient id="sg" x1="0" y1="0" x2="0" y2="1"><stop offset="0" stop-color="#fafafa"/><stop offset="1" stop-color="#9a9a9a"/></linearGradient>
<linearGradient id="cg" x1="0" y1="0" x2="1" y2="0"><stop offset="0" stop-color="#d8d8d8"/><stop offset="0.35" stop-color="#ffffff"/><stop offset="1" stop-color="#9c9c9c"/></linearGradient></defs>
<ellipse cx="8" cy="9.8" rx="7.6" ry="3.2" fill="url(#sg)" stroke="#4a4a4a" stroke-width="0.7"/>
<ellipse cx="8" cy="9.3" rx="5" ry="1.6" fill="#f4f4f4"/>
<path d="M14,4.6 Q17.4,4 16.4,6.8 Q15.6,8.6 12.8,8.6" fill="none" stroke="#5a5a5a" stroke-width="1.1"/>
<path d="M3,3.6 Q3.1,9.8 8,10 Q12.9,9.8 13.1,3.6z" fill="url(#cg)" stroke="#505050" stroke-width="0.7"/>
<ellipse cx="8" cy="3.6" rx="5.1" ry="1.7" fill="#e8e8e8" stroke="#606060" stroke-width="0.6"/>
<ellipse cx="8" cy="3.9" rx="3.9" ry="1.1" fill="#8a0c0c"/>
</svg>
<div class="t" style="left:243.60px;top:348.62px;font-size:6.65px;line-height:10px;transform:scaleX(0.9711);">Pause</div>
<div class="g" style="left:289px;top:338.6px;width:131.6px;height:26.8px"></div>
<div class="a" style="left:292.00px;top:336.00px;width:31.00px;height:6.00px;background:#ece8c4"></div>
<div class="t" style="left:293.00px;top:334.82px;font-size:6.65px;line-height:10px;transform:scaleX(0.9595);">Stornieren</div>
<div class="t" style="left:299.60px;top:348.02px;font-size:6.65px;line-height:10px;transform:scaleX(0.9198);">WT-Nr.</div>
<div class="in" style="left:322.4px;top:347px;width:23.6px;height:12.4px"></div>
<div class="t" style="left:324.00px;top:348.42px;font-size:6.8px;line-height:10px;transform:scaleX(0.9000);">40</div>
<div class="a" style="left:336.60px;top:348.40px;width:8.80px;height:10.00px;background:#d4d0c8"></div>
<svg class="a" style="left:339.00px;top:350.20px" width="4" height="2.2" viewBox="0 0 4 2.2"><path d="M0,2.2 L2.0,0 L4,2.2z" fill="#000"/></svg>
<svg class="a" style="left:339.00px;top:354.70px" width="4" height="2.2" viewBox="0 0 4 2.2"><path d="M0,0 L2.0,2.2 L4,0z" fill="#000"/></svg>
<div class="a" style="left:336.60px;top:353.20px;width:8.80px;height:0.60px;background:#909090"></div>
<div class="a" style="left:350.00px;top:345.40px;width:68.20px;height:14.80px;background:#ece8c4;border:1px solid #66665c;border-bottom:2px solid #3e3e3e;border-right-color:#4a4a4a;box-shadow:inset 1px 1px 0 #fdfcf2,inset -1px -1px 0 #b0ae98"></div>
<svg class="a" style="left:364.2px;top:348.6px" width="7" height="7" viewBox="0 0 7 7"><path d="M1,1 L6,6 M6,1 L1,6" stroke="#b81212" stroke-width="1.9"/></svg>
<div class="t" style="left:374.40px;top:348.22px;font-size:6.65px;line-height:10px;transform:scaleX(0.9530);">Stornieren</div>
<div class="a" style="left:564.25px;top:345.50px;width:67.50px;height:15.00px;background:#ece8c4;border:1px solid #66665c;border-bottom:2px solid #3e3e3e;border-right-color:#4a4a4a;box-shadow:inset 1px 1px 0 #fdfcf2,inset -1px -1px 0 #b0ae98"></div>
<div class="t" style="left:566.75px;top:348.72px;font-size:6.65px;line-height:10px;transform:scaleX(0.9617);">Leerträger abschicken</div>
<div class="a" style="left:15.20px;top:383.00px;width:774.60px;height:1.60px;background:#7a7a72"></div>
<div class="a" style="left:15.20px;top:384.60px;width:773.40px;height:0.80px;background:#fbf8e0"></div>
<div class="a" style="left:15.20px;top:385.40px;width:773.40px;height:10.70px;background:#ece8c4"></div>
<div class="a" style="left:0.00px;top:395.00px;width:15.20px;height:1.10px;background:#ece8c4"></div>
<div class="a" style="left:0.00px;top:395.30px;width:789.80px;height:0.80px;background:#faf8e0"></div>
<div class="a" style="left:0.00px;top:396.10px;width:789.80px;height:1.20px;background:#787878"></div>
<div class="a" style="left:0.00px;top:397.30px;width:797.50px;height:1.00px;background:#faf8e0"></div>
<div class="a" style="left:54.40px;top:384.80px;width:1.00px;height:10.20px;background:#fbfaf0"></div>
<div class="t" style="left:17.90px;top:385.22px;font-size:6.65px;line-height:10px;transform:scaleX(1.0098);">Abschicken</div>
<div class="a" style="left:55.60px;top:384.00px;width:34.80px;height:10.40px;background:#ece8c4;border:1px solid;border-color:#8a8a80 #3c3c3c #3c3c3c #8a8a80;border-width:1px 1.4px 1.6px 1px;box-shadow:inset 1px 1px 0 #fbfaf0"></div>
<div class="a" style="left:15.20px;top:394.60px;width:40.20px;height:0.80px;background:#9a9a90"></div>
<div class="t" style="left:58.10px;top:384.32px;font-size:6.65px;line-height:10px;transform:scaleX(0.9628);">Diagramm</div>
<div class="a" style="left:0.00px;top:398.90px;width:284.20px;height:35.10px;background:#fff;border:1px solid #4e4e4e;border-bottom-color:#e8e8e8"></div>
<div class="a" style="left:66.00px;top:400.00px;width:1.00px;height:19.40px;background:#dcdcdc"></div>
<div class="a" style="left:1.00px;top:408.90px;width:274.20px;height:0.80px;background:#dcdcdc"></div>
<div class="a" style="left:1.00px;top:419.00px;width:274.20px;height:0.80px;background:#dcdcdc"></div>
<div class="t" style="left:2.25px;top:399.72px;font-size:6.6px;line-height:10px;transform:scaleX(0.9289);color:#ee2626">05.06.2013 16:13:52</div>
<div class="t" style="left:67.60px;top:399.72px;font-size:6.6px;line-height:10px;transform:scaleX(0.9068);color:#ee2626">Trockenlauf B4</div>
<div class="t" style="left:2.25px;top:410.02px;font-size:6.6px;line-height:10px;transform:scaleX(0.9289);color:#ee2626">05.06.2013 16:13:52</div>
<div class="t" style="left:67.60px;top:410.02px;font-size:6.6px;line-height:10px;transform:scaleX(0.9068);color:#ee2626">Trockenlauf B5</div>
<div class="a" style="left:275.20px;top:399.90px;width:8.00px;height:33.30px;background:#ecebe6"></div>
<div class="sb" style="left:275.2px;top:399.9px;width:8px;height:7.6px"></div>
<svg class="a" style="left:277.00px;top:402.20px" width="4.4" height="2.6" viewBox="0 0 4.4 2.6"><path d="M0,2.6 L2.2,0 L4.4,2.6z" fill="#000"/></svg>
<div class="sb" style="left:275.2px;top:407.5px;width:8px;height:11px"></div>
<div class="sb" style="left:275.2px;top:425.4px;width:8px;height:7.8px"></div>
<svg class="a" style="left:277.00px;top:428.00px" width="4.4" height="2.6" viewBox="0 0 4.4 2.6"><path d="M0,0 L2.2,2.6 L4.4,0z" fill="#000"/></svg>
<div class="a" style="left:0.00px;top:434.00px;width:797.50px;height:2.00px;background:#a4a4a4"></div>
<div class="rb" style="left:333.9px;top:405.2px;width:50.3px;height:17.1px"></div>
<div class="t" style="left:337.21px;top:409.23px;font-size:7.0px;line-height:10px;transform:scaleX(0.9200);color:#262626">Hupe quittieren</div>
<div class="rb" style="left:389px;top:405.2px;width:49.7px;height:17.1px"></div>
<div class="t" style="left:402.57px;top:405.33px;font-size:7.0px;line-height:10px;transform:scaleX(0.9200);color:#262626">Störung</div>
<div class="t" style="left:400.60px;top:413.03px;font-size:7.0px;line-height:10px;transform:scaleX(0.9200);color:#262626">quittieren</div>
<div class="in" style="left:702.5px;top:405px;width:44px;height:11px"></div>
<div class="t" style="left:704.20px;top:406.22px;font-size:6.6px;line-height:10px;transform:scaleX(0.8451);">Schoppa</div>
<div class="in" style="left:750.5px;top:405px;width:44.2px;height:11px"></div>
<div class="a" style="left:752.20px;top:407.60px;width:15.30px;height:0.80px;background:#6a6a6a"></div>
<div class="t" style="left:754.30px;top:421.52px;font-size:6.6px;line-height:10px;transform:scaleX(0.9258);">Abmelden</div>
<svg class="a" style="left:788.70px;top:424.90px" width="4" height="2.4" viewBox="0 0 4 2.4"><path d="M0,0 L2.0,2.4 L4,0z" fill="#000"/></svg>
</body></html>
